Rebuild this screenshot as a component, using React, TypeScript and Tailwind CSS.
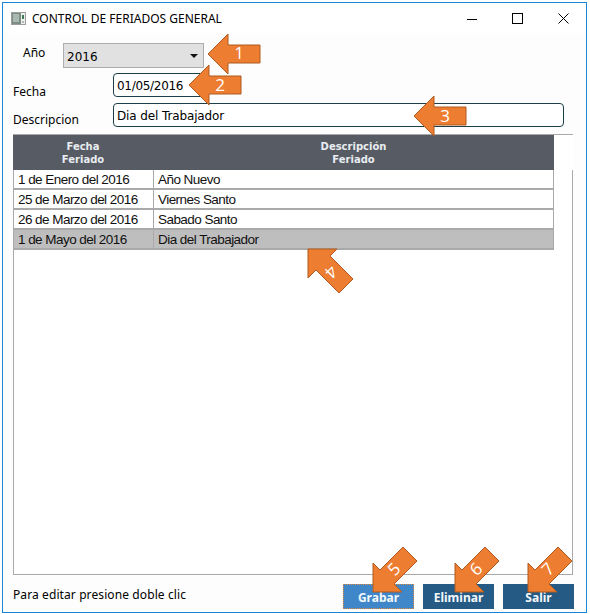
const sans = "font-['Noto_Sans',sans-serif]";

const rows = [
  { fecha: "1 de Enero del 2016", desc: "Año Nuevo" },
  { fecha: "25 de Marzo del 2016", desc: "Viernes Santo" },
  { fecha: "26 de Marzo del 2016", desc: "Sabado Santo" },
  { fecha: "1 de Mayo del 2016", desc: "Dia del Trabajador", selected: true },
];

const leftArrow = (x: number, y: number) =>
  `${x},${y} ${x + 20},${y - 20} ${x + 20},${y - 9} ${x + 52},${y - 9} ${x + 52},${y + 9} ${x + 20},${y + 9} ${x + 20},${y + 20}`;

const downArrow = (dx: number) =>
  [
    [373, 592],
    [373, 563],
    [380, 570],
    [403, 547],
    [417, 561],
    [394, 584],
    [402, 592],
  ]
    .map(([x, y]) => `${x + dx},${y}`)
    .join(" ");

const arrows = [
  { points: leftArrow(208, 54), n: "1", x: 239, y: 53, r: 0 },
  { points: leftArrow(189, 85), n: "2", x: 220, y: 85, r: 0 },
  { points: leftArrow(414, 116), n: "3", x: 445, y: 116, r: 0 },
  { points: "308,249 337,249 330,256 353,279 339,293 316,270 308,278", n: "4", x: 331, y: 272, r: 135 },
  { points: downArrow(0), n: "5", x: 394, y: 569, r: -45 },
  { points: downArrow(82), n: "6", x: 476, y: 569, r: -45 },
  { points: downArrow(155), n: "7", x: 548, y: 569, r: -45 },
];

function AppIcon() {
  return (
    <svg width="15" height="13" viewBox="0 0 15 13" className="shrink-0">
      <rect x="0.5" y="0.5" width="14" height="12" fill="#eef0ee" stroke="#9a9f9c" />
      <rect x="1" y="1" width="9" height="11" fill="#7d8c85" />
      <rect x="2" y="2" width="6" height="8" fill="#a9b8b0" />
      <rect x="11" y="3" width="2" height="4" fill="#3b7c5b" />
      <rect x="11" y="9" width="2" height="2" fill="#b4b8b6" />
    </svg>
  );
}

function WindowButtons() {
  return (
    <div className="flex items-center gap-[35px] mr-[17px]">
      <svg width="10" height="10" viewBox="0 0 10 10">
        <path d="M0 5.5H10" stroke="#000" strokeWidth="1" />
      </svg>
      <svg width="11" height="11" viewBox="0 0 11 11">
        <rect x="0.5" y="0.5" width="10" height="10" fill="none" stroke="#000" />
      </svg>
      <svg width="11" height="11" viewBox="0 0 11 11">
        <path d="M0.5 0.5L10.5 10.5M10.5 0.5L0.5 10.5" stroke="#000" />
      </svg>
    </div>
  );
}

export default function App() {
  return (
    <div className="relative w-[590px] h-[614px] bg-white pl-[2px] pr-[3px] pt-[2px] pb-px overflow-hidden">
      <div className="w-full h-full border border-[#1b86d8] bg-[#fdfdfd] flex flex-col">
        <div className="h-[30px] shrink-0 bg-white flex items-center justify-between pl-2 pt-[1px]">
          <div className="flex items-center gap-[6px]">
            <AppIcon />
            <span className={`${sans} text-[12px] leading-none text-black`}>CONTROL DE FERIADOS GENERAL</span>
          </div>
          <WindowButtons />
        </div>

        <div className="flex flex-col pl-[10px] flex-1">
          <div className="flex items-center h-[25px] mt-[10px]">
            <span className={`${sans} text-[12px] w-[50px] pl-[10px] pb-[5px] text-black`}>Año</span>
            <div className="w-[141px] h-[25px] bg-[#e1e1e1] border border-[#adadad] flex items-center justify-between pl-[3px] pr-[5px]">
              <span className="font-['DejaVu_Sans',sans-serif] text-[12px] text-black pt-[3px]">2016</span>
              <svg width="8" height="4" viewBox="0 0 8 4">
                <path d="M0 0H8L4 4Z" fill="#111" />
              </svg>
            </div>
          </div>

          <div className="flex items-center h-[24px] mt-[5px]">
            <span className={`${sans} text-[12px] w-[100px] pt-[14px] text-black`}>Fecha</span>
            <div className="w-[95px] h-[24px] bg-white border border-[#1d3f4a] rounded-[4px] flex items-center pl-[3px]">
              <span className="font-['DejaVu_Sans',sans-serif] text-[12px] tracking-[-0.3px] text-black pt-[2px]">01/05/2016</span>
            </div>
          </div>

          <div className="flex items-center h-[24px] mt-[6px]">
            <span className={`${sans} text-[12px] w-[100px] pt-[10px] text-black`}>Descripcion</span>
            <div className="w-[451px] h-[24px] bg-white border border-[#1d3f4a] rounded-[4px] flex items-center pl-[3px]">
              <span className="font-['DejaVu_Sans',sans-serif] text-[12px] tracking-[-0.12px] text-black pt-[2px]">Dia del Trabajador</span>
            </div>
          </div>

          <div className="w-[560px] h-[441px] mt-[7px] flex flex-col">
            <div className="flex shrink-0 h-[36px]">
              <div className="w-[541px] border-t border-[#a9a9a9] bg-[#575b63] flex font-['DejaVu_Sans',sans-serif] font-bold text-[10px] leading-[13px] text-[#e9edf2] text-center items-center">
                <div className="w-[140px]">
                  Fecha
                  <br />
                  Feriado
                </div>
                <div className="flex-1">
                  Descripción
                  <br />
                  Feriado
                </div>
              </div>
              <div className="flex-1 border-t border-[#a9a9a9] bg-white" />
            </div>
            <div className="flex-1 border-l border-r border-b border-[#a9a9a9] bg-white">
              {rows.map((r) => (
                <div
                  key={r.fecha}
                  className={`w-[540px] h-[20px] flex border-b-2 border-r border-[#a9a9a9] font-['Liberation_Sans',sans-serif] text-[13.5px] tracking-[-0.55px] text-[#111] ${r.selected ? "bg-[#bebebe]" : "bg-white"}`}
                >
                  <div className="w-[140px] h-full border-r border-[#a9a9a9] pl-[4px] leading-[20px] whitespace-nowrap">
                    {r.fecha}
                  </div>
                  <div className="pl-[4px] leading-[20px]">{r.desc}</div>
                </div>
              ))}
            </div>
          </div>

          <div className="flex items-center justify-between w-[561px] h-[25px] mt-[9px]">
            <span className={`${sans} text-[12px] tracking-[0.1px] text-black pb-[3px]`}>Para editar presione doble clic</span>
            <div className={`flex gap-[9px] ${sans} font-bold text-[12px] text-[#f4f8fb]`}>
              <div className="w-[71px] h-[25px] bg-[#3f87c9] border border-dotted border-[#e08a3c] flex items-center justify-center pt-[3px]">
                Grabar
              </div>
              <div className="w-[71px] h-[25px] bg-[#255a85] flex items-center justify-center pt-[3px]">Eliminar</div>
              <div className="w-[71px] h-[25px] bg-[#255a85] flex items-center justify-center pt-[3px]">Salir</div>
            </div>
          </div>
        </div>
      </div>

      <svg className="absolute left-0 top-0 pointer-events-none" width="590" height="614" viewBox="0 0 590 614">
        {arrows.map((a) => (
          <g key={a.n}>
            <polygon points={a.points} fill="#ed7d31" stroke="#ae5a21" strokeWidth="1" />
            <text
              x={a.x}
              y={a.y + 6}
              fontFamily="'Open Sans', sans-serif"
              fontSize="17"
              fill="#ffffff"
              textAnchor="middle"
              transform={a.r ? `rotate(${a.r} ${a.x} ${a.y})` : undefined}
            >
              {a.n}
            </text>
          </g>
        ))}
      </svg>
    </div>
  );
}
